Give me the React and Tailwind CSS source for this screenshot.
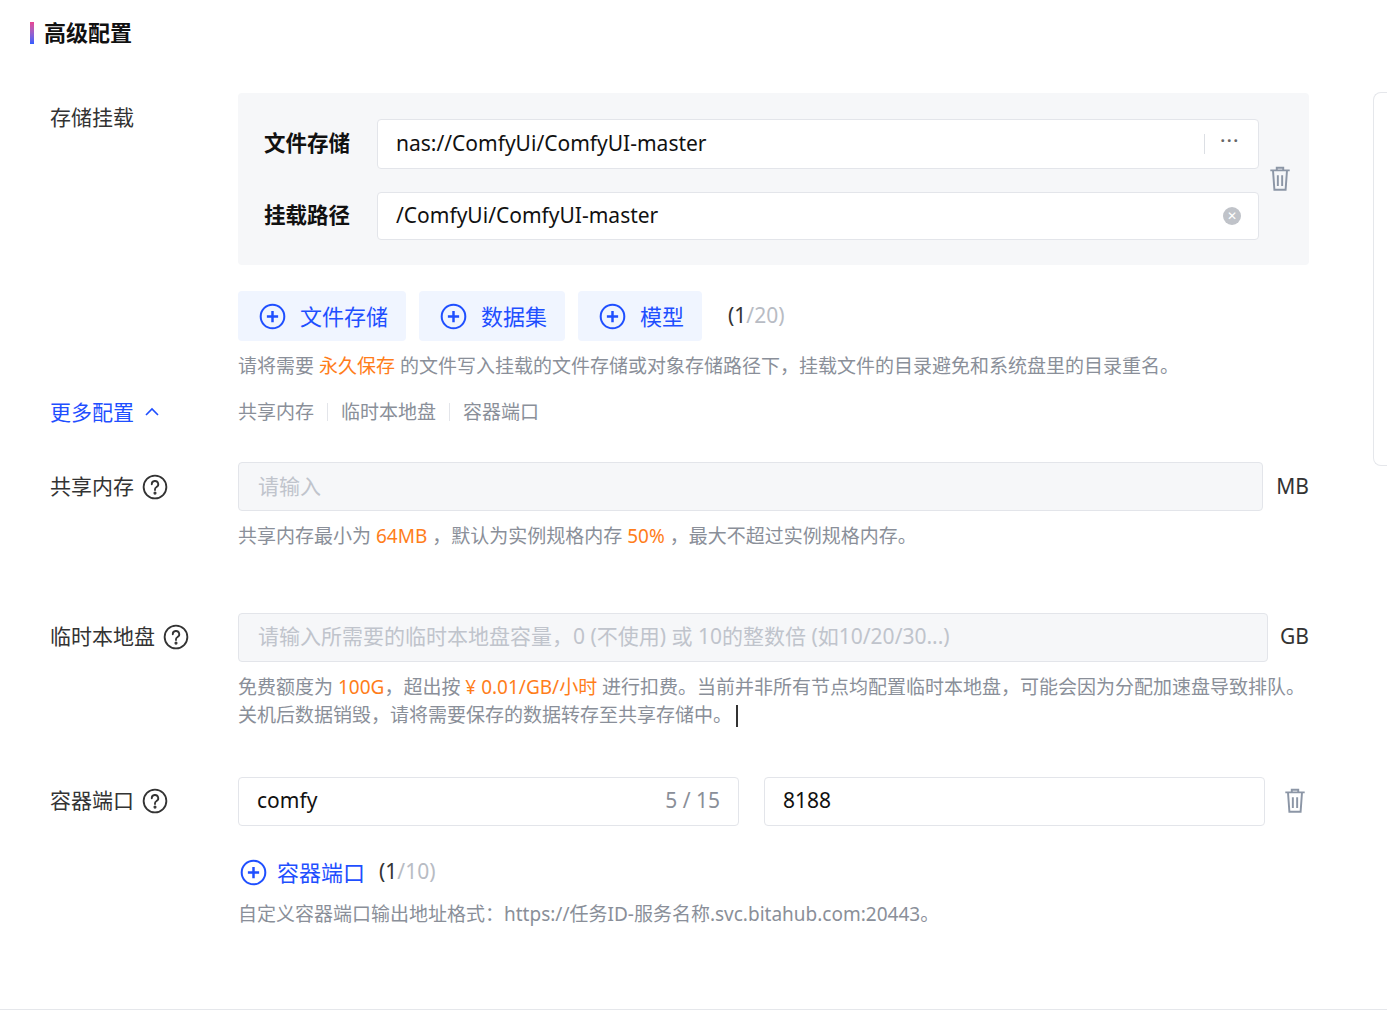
import React from "react";

const PlusCircle = ({ className }) => (
  <svg className={className} viewBox="0 0 24 24" fill="none" stroke="currentColor" strokeWidth={1.8}>
    <circle cx="12" cy="12" r="10.5" />
    <path d="M12 7v10M7 12h10" strokeWidth={2.2} />
  </svg>
);

const Help = () => (
  <svg className="w-[26px] h-[26px] text-[#333]" viewBox="0 0 24 24" fill="none" stroke="currentColor" strokeWidth={1.7}>
    <circle cx="12" cy="12" r="10.5" />
    <path d="M9 9.5a3 3 0 1 1 4.2 2.7c-.8.4-1.2 1-1.2 1.8v.8" strokeLinecap="round" />
    <circle cx="12" cy="17.6" r="0.6" fill="currentColor" />
  </svg>
);

const Trash = () => (
  <svg className="w-[26px] h-[28px] text-[#8c96a6]" viewBox="0 0 24 26" fill="none" stroke="currentColor" strokeWidth={1.8}>
    <path d="M3 5h18M9 5V2.5h6V5M5.5 5l1.3 18h10.4l1.3-18M10 9.5v10M14 9.5v10" />
  </svg>
);

const Label = ({ children }) => (
  <div className="w-[188px] h-[49px] shrink-0 flex items-center gap-2 text-[21px] text-[#333]">{children}</div>
);

export default function App() {
  return (
    <div
      className="relative w-[1387px] h-[1012px] bg-white text-[#333] overflow-hidden"
      style={{ fontFamily: '"Noto Sans", "Noto Sans CJK SC", sans-serif' }}
    >
      <div className="absolute right-0 top-[92px] w-[14px] h-[374px] border border-r-0 border-[#e5e7eb] rounded-l-lg" />
      <div className="pl-[30px] pt-[16px] flex items-center gap-[10px]">
        <div className="w-[4px] h-[22px] bg-gradient-to-b from-[#e84393] to-[#2f5bff]" />
        <div className="text-[22px] font-bold text-[#111]">高级配置</div>
      </div>

      <div className="pl-[50px] pr-[78px] mt-[44px]">
        {/* storage mount */}
        <div className="flex">
          <div className="w-[188px] shrink-0 text-[21px] pt-[9px]">存储挂载</div>
          <div className="flex-1">
            <div className="bg-[#f6f7f9] rounded h-[172px] flex items-center pl-[26px] pr-[50px] relative">
              <div className="flex-1 flex flex-col gap-[23px]">
                <div className="flex items-center">
                  <div className="w-[113px] text-[21.5px] font-bold text-[#111]">文件存储</div>
                  <div className="flex-1 h-[50px] bg-white border border-[#e3e5ea] rounded flex items-center pl-[18px] pr-[18px] text-[21px] text-[#111]">
                    <span className="flex-1">nas://ComfyUi/ComfyUI-master</span>
                    <span className="w-px h-[20px] bg-[#dcdfe4] mr-[16px]" />
                    <span className="text-[#666] tracking-[2px] text-[16px] font-bold leading-none pb-[8px]">···</span>
                  </div>
                </div>
                <div className="flex items-center">
                  <div className="w-[113px] text-[21.5px] font-bold text-[#111]">挂载路径</div>
                  <div className="flex-1 h-[48px] bg-white border border-[#e3e5ea] rounded flex items-center pl-[18px] pr-[17px] text-[21px] text-[#111]">
                    <span className="flex-1">/ComfyUi/ComfyUI-master</span>
                    <span className="w-[18px] h-[18px] rounded-full bg-[#c0c3c9] text-white text-[12px] flex items-center justify-center leading-none">✕</span>
                  </div>
                </div>
              </div>
              <div className="absolute right-[16px] top-[72px]"><Trash /></div>
            </div>

            <div className="flex items-center gap-[13px] mt-[26px]">
              {["文件存储", "数据集", "模型"].map((t) => (
                <div key={t} className="h-[50px] bg-[#f0f5ff] rounded flex items-center gap-[14px] pl-[21px] pr-[18px] text-[22px] text-[#1f4fff]">
                  <PlusCircle className="w-[27px] h-[27px]" />
                  {t}
                </div>
              ))}
              <div className="ml-[13px] text-[21px] text-[#b8bcc4]"><span className="text-[#333]">(1</span>/20)</div>
            </div>
            <div className="mt-[11px] text-[19px] text-[#8a8f99]">
              请将需要 <span className="text-[#ff7d1a]">永久保存</span> 的文件写入挂载的文件存储或对象存储路径下，挂载文件的目录避免和系统盘里的目录重名。
            </div>
          </div>
        </div>

        {/* more config */}
        <div className="flex items-center mt-[16px]">
          <div className="w-[188px] shrink-0 text-[21px] text-[#1f4fff] flex items-center gap-[10px]">
            更多配置
            <svg className="w-[16px] h-[16px]" viewBox="0 0 16 16" fill="none" stroke="currentColor" strokeWidth={1.6}><path d="M2 11l6-6 6 6" /></svg>
          </div>
          <div className="flex items-center text-[19px] text-[#8a8f99]">
            <span>共享内存</span>
            <span className="w-px h-[18px] bg-[#e3e5ea] mx-[13px]" />
            <span>临时本地盘</span>
            <span className="w-px h-[18px] bg-[#e3e5ea] mx-[13px]" />
            <span>容器端口</span>
          </div>
        </div>

        {/* shared memory */}
        <div className="flex mt-[34px]">
          <Label>共享内存 <Help /></Label>
          <div className="flex-1">
            <div className="flex items-center">
              <div className="flex-1 h-[49px] bg-[#f6f7f9] border border-[#e3e5ea] rounded flex items-center pl-[19px] text-[21px] text-[#c0c4cc]">请输入</div>
              <div className="w-[46px] text-right text-[21px]">MB</div>
            </div>
            <div className="mt-[11px] text-[19px] text-[#8a8f99]">
              共享内存最小为 <span className="text-[#ff7d1a]">64MB</span> ，默认为实例规格内存 <span className="text-[#ff7d1a]">50%</span> ，最大不超过实例规格内存。
            </div>
          </div>
        </div>

        {/* temp disk */}
        <div className="flex mt-[62px]">
          <Label>临时本地盘 <Help /></Label>
          <div className="flex-1">
            <div className="flex items-center">
              <div className="flex-1 h-[49px] bg-[#f6f7f9] border border-[#e3e5ea] rounded flex items-center pl-[19px] text-[21px] text-[#c0c4cc]">请输入所需要的临时本地盘容量，0 (不使用) 或 10的整数倍 (如10/20/30...)</div>
              <div className="w-[41px] text-right text-[21px]">GB</div>
            </div>
            <div className="mt-[11px] text-[19px] leading-[28px] text-[#8a8f99]">
              免费额度为 <span className="text-[#ff7d1a]">100G</span>，超出按 <span className="text-[#ff7d1a]">¥ 0.01/GB/小时</span> 进行扣费。当前并非所有节点均配置临时本地盘，可能会因为分配加速盘导致排队。<br />
              关机后数据销毁，请将需要保存的数据转存至共享存储中。<span className="inline-block w-[2px] h-[22px] bg-[#333] align-middle ml-[4px]" />
            </div>
          </div>
        </div>

        {/* container port */}
        <div className="flex mt-[48px]">
          <Label>容器端口 <Help /></Label>
          <div className="flex-1">
            <div className="flex items-center">
              <div className="w-[501px] h-[49px] border border-[#e3e5ea] rounded flex items-center px-[18px] text-[21px] text-[#111]">
                <span className="flex-1">comfy</span>
                <span className="text-[#8a8f99]">5 / 15</span>
              </div>
              <div className="w-[501px] ml-[25px] h-[49px] border border-[#e3e5ea] rounded flex items-center px-[18px] text-[21px] text-[#111]">8188</div>
              <div className="ml-[17px]"><Trash /></div>
            </div>
            <div className="flex items-center mt-[30px] pl-[2px] text-[22px] text-[#1f4fff] gap-[10px]">
              <PlusCircle className="w-[27px] h-[27px]" />
              容器端口
              <span className="ml-[4px] text-[21px] text-[#b8bcc4]"><span className="text-[#333]">(1</span>/10)</span>
            </div>
            <div className="mt-[11px] text-[19px] text-[#8a8f99]">自定义容器端口输出地址格式：https://任务ID-服务名称.svc.bitahub.com:20443。</div>
          </div>
        </div>
      </div>
      <div className="absolute left-0 right-0 top-[1009px] h-px bg-[#e5e7eb]" />
    </div>
  );
}
